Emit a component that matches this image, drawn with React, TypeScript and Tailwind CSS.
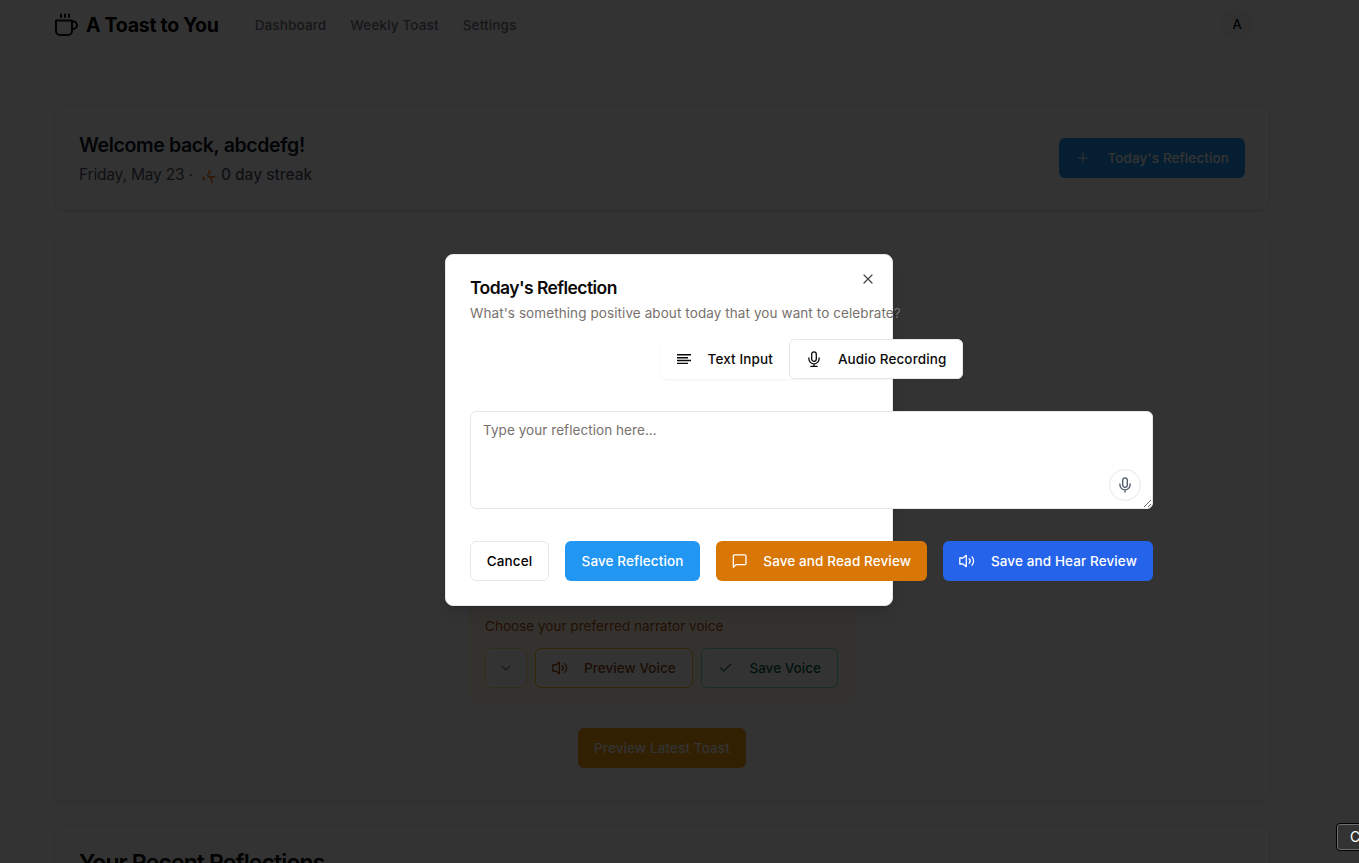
import React from "react";
import { Check, ChevronDown, X, Plus } from "lucide-react";

function CoffeeIcon() {
  return (
    <svg width="24" height="24" viewBox="0 0 24 24" fill="none" stroke="currentColor" strokeWidth="2">
      <path d="M2 7.5h16v10.5a4 4 0 0 1-4 4h-8a4 4 0 0 1-4-4z" strokeLinejoin="round" />
      <path d="M18 8.5h1.2a3.2 3.2 0 0 1 0 7.5H18" />
      <path d="M7 .8v4M11 .8v4M15 .8v4" />
    </svg>
  );
}

function StreakIcon() {
  return (
    <svg width="16" height="16" viewBox="0 0 16 16" fill="none" stroke="currentColor" strokeWidth="1.6">
      <path d="M8.4 1v4.2M2.6 7.5v4M6.2 5.8l2.6 2.6M8.6 8.2l5.6-.3M9.6 8.4l1.9 5.6" />
    </svg>
  );
}

function LinesIcon() {
  return (
    <svg width="16" height="16" viewBox="0 0 16 16" className="mr-4" fill="none" stroke="currentColor" strokeWidth="1.4">
      <path d="M1 3.7h14M1 6.7h11M1 9.5h14M1 12.4h11" />
    </svg>
  );
}

function MicIcon({ base = false }: { base?: boolean }) {
  return (
    <svg width="16" height="16" viewBox="0 0 16 16" fill="none" stroke="currentColor" strokeWidth="1.3" strokeLinecap="round">
      <rect x="5.7" y=".9" width="4.6" height="9.4" rx="2.3" />
      <path d="M2.9 6.8v1a5.1 5.1 0 0 0 10.2 0v-1M8 12.9v2.2" />
      {base && <path d="M4.8 15.3h6.4" />}
    </svg>
  );
}

function VolumeIcon() {
  return (
    <svg width="16" height="16" viewBox="0 0 16 16" className="mr-4" fill="none" stroke="currentColor" strokeWidth="1.3" strokeLinecap="round" strokeLinejoin="round">
      <path d="M7.3 2.3 4 5H.8v6H4l3.3 2.7z" />
      <path d="M10.2 5.7a3.4 3.4 0 0 1 0 4.6M13 3.8a6.2 6.2 0 0 1 0 8.4" />
    </svg>
  );
}

function ChatIcon() {
  return (
    <svg width="16" height="16" viewBox="0 0 16 16" className="mr-4" fill="none" stroke="currentColor" strokeWidth="1.3" strokeLinecap="round" strokeLinejoin="round">
      <path d="M2.6 1.7h10.8a1.2 1.2 0 0 1 1.2 1.2v7.6a1.2 1.2 0 0 1-1.2 1.2H4.3l-2.9 2.8V2.9a1.2 1.2 0 0 1 1.2-1.2z" />
    </svg>
  );
}

const small = "text-[13.5px] leading-5 tracking-[0.09px]";
const button = "flex h-10 shrink-0 items-center rounded-md px-4 text-[13.5px] leading-5 font-medium tracking-[0.11px] whitespace-nowrap";

function Header() {
  return (
    <header className="flex h-[50px] items-center justify-between pr-[106px] pl-[54px]">
      <div className="flex items-center">
        <CoffeeIcon />
        <span className="ml-2 pt-px text-[19.5px] font-bold tracking-[-0.28px] text-black">A Toast to You</span>
        <nav className="ml-9 flex gap-6 text-[13.5px] leading-5 font-medium tracking-[0.14px] text-gray-500">
          <span>Dashboard</span>
          <span>Weekly Toast</span>
          <span>Settings</span>
        </nav>
      </div>
      <div className="flex size-8 items-center justify-center rounded-full bg-gray-100 text-[13px] font-medium">A</div>
    </header>
  );
}

function Welcome() {
  return (
    <section className="flex h-[106px] items-center justify-between rounded-lg border border-gray-200 px-6 shadow-xs">
      <div className="pt-[3px]">
        <h1 className="text-[19.5px] leading-7 font-semibold tracking-[-0.35px] text-gray-900">Welcome back, abcdefg!</h1>
        <p className="mt-0.5 flex items-center text-[15.5px] leading-7 text-gray-600">
          <span className="tracking-[-0.18px]">Friday, May 23 ·</span>
          <span className="mr-1 ml-2 pt-1 text-orange-500"><StreakIcon /></span>
          <span className="font-medium">0 day streak</span>
        </p>
      </div>
      <div className={`${button} bg-[#2196f3] text-white`}>
        <Plus size={16} strokeWidth={1.6} className="mr-4" />
        Today's Reflection
      </div>
    </section>
  );
}

function VoicePanel() {
  return (
    <section className="mt-6 flex h-[566px] flex-col items-center justify-end rounded-lg border border-gray-100 pb-8 shadow-sm">
      <div className="flex h-[110px] w-[386px] flex-col rounded-lg bg-[#fffbeb] px-4 pt-[22px]">
        <p className="text-[13.5px] leading-5 tracking-[0.02px] text-[#b45309]">Choose your preferred narrator voice</p>
        <div className="mt-3 flex gap-2">
          <div className="flex h-10 w-[42px] shrink-0 items-center justify-center rounded-md border border-[#fde68a] bg-white text-gray-500"><ChevronDown size={16} strokeWidth={1.7} /></div>
          <div className="flex h-10 w-[158px] shrink-0 items-center rounded-md border border-[#fbbf24] bg-white px-4 text-[13.5px] leading-5 font-medium tracking-[0.06px] whitespace-nowrap text-[#92400e]"><VolumeIcon />Preview Voice</div>
          <div className="flex h-10 w-[137px] shrink-0 items-center rounded-md border border-[#6ee7b7] bg-white px-4 text-[13.5px] leading-5 font-medium tracking-[0.03px] whitespace-nowrap text-[#065f46]"><Check size={16} strokeWidth={1.7} className="mr-4" />Save Voice</div>
        </div>
      </div>
      <div className={`${button} mt-6 bg-[#f59e0b] text-white`}>Preview Latest Toast</div>
    </section>
  );
}

function Dialog() {
  return (
    <div role="dialog" className="absolute top-[254px] left-[445px] h-[352px] w-[448px] rounded-lg border border-gray-200 bg-white p-6 shadow-lg">
      <X size={16} strokeWidth={1.8} className="absolute top-4 right-4 text-[#444]" />
      <div className="w-[683px]">
        <h2 className="text-[17.5px] leading-[18px] font-semibold tracking-[-0.57px]">Today's Reflection</h2>
        <p className={`${small} mt-1.5 text-[#78716c]`}>What's something positive about today that you want to celebrate?</p>
        <div className="mt-4 flex justify-center">
          <div className="flex rounded-md bg-white shadow-xs">
            <div className={button}><LinesIcon />Text Input</div>
            <div className={`${button} border border-gray-200 bg-white`}><span className="mr-4"><MicIcon base /></span>Audio Recording</div>
          </div>
        </div>
        <div className="relative mt-8">
          <textarea placeholder="Type your reflection here..." className="block h-[98px] w-full resize-y rounded-md border border-gray-200 bg-white px-3 py-2 text-[13.5px] leading-5 tracking-[0.06px] placeholder:text-[#78716c]" />
          <div className="absolute right-3 bottom-2 flex size-8 items-center justify-center rounded-full border border-gray-200 bg-white text-gray-600"><MicIcon /></div>
        </div>
        <div className="mt-8 flex justify-between text-white">
          <div className={`${button} w-[79px] justify-center border border-gray-200 text-black`}>Cancel</div>
          <div className={`${button} w-[135px] justify-center bg-[#2196f3]`}>Save Reflection</div>
          <div className={`${button} w-[211px] bg-[#d97706]`}><ChatIcon />Save and Read Review</div>
          <div className={`${button} w-[210px] bg-[#2563eb]`}><VolumeIcon />Save and Hear Review</div>
        </div>
      </div>
    </div>
  );
}

export default function App() {
  return (
    <div className="relative h-[863px] w-full overflow-hidden bg-white font-['Inter',sans-serif] text-[#0c0a09]">
      <Header />
      <main className="ml-[54px] w-[1216px] pt-[55px]">
        <Welcome />
        <VoicePanel />
        <section className="mt-6 h-40 rounded-lg border border-gray-200 px-6 pt-[21px] shadow-xs">
          <h2 className="text-[23px] leading-8 font-semibold tracking-[-0.87px]">Your Recent Reflections</h2>
        </section>
      </main>
      <div className="absolute inset-0 bg-black/80" />
      <Dialog />
      <div className="absolute top-[823px] left-[1336px] h-[28px] w-20 rounded border border-black bg-[#333] pl-[13px] text-sm leading-[26px] text-white ring-1 ring-white/30 ring-inset">C</div>
    </div>
  );
}
